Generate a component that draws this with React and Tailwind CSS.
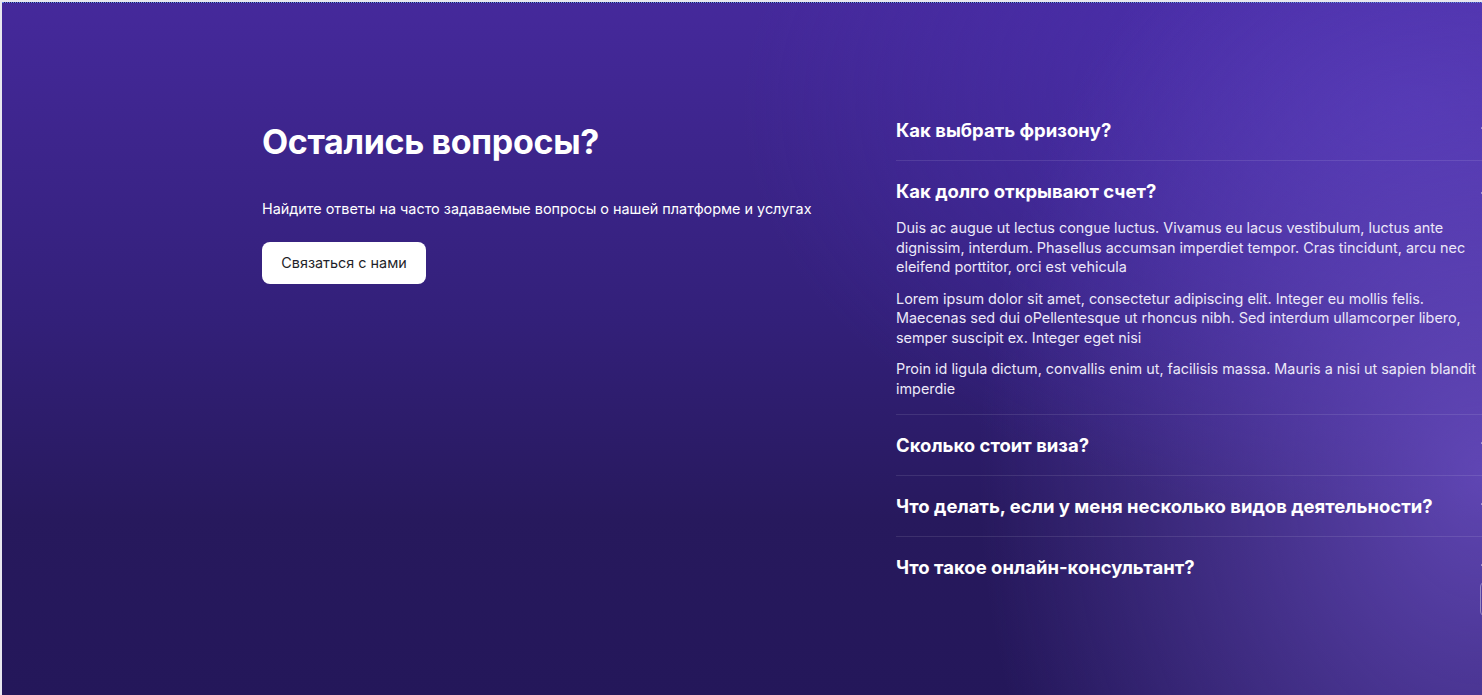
import { ChevronDown, ChevronUp } from 'lucide-react';

const faqs = [
  { q: 'Как выбрать фризону?' },
  {
    q: 'Как долго открывают счет?',
    open: true,
    a: [
      'Duis ac augue ut lectus congue luctus. Vivamus eu lacus vestibulum, luctus ante dignissim, interdum. Phasellus accumsan imperdiet tempor. Cras tincidunt, arcu nec eleifend porttitor, orci est vehicula',
      'Lorem ipsum dolor sit amet, consectetur adipiscing elit. Integer eu mollis felis. Maecenas sed dui oPellentesque ut rhoncus nibh. Sed interdum ullamcorper libero, semper suscipit ex. Integer eget nisi',
      'Proin id ligula dictum, convallis enim ut, facilisis massa. Mauris a nisi ut sapien blandit imperdie',
    ],
  },
  { q: 'Сколько стоит виза?' },
  { q: 'Что делать, если у меня несколько видов деятельности?' },
  { q: 'Что такое онлайн-консультант?' },
];

function FaqItem({ item, last }) {
  return (
    <div className={last ? '' : 'border-b border-white/10'}>
      <button className="flex w-full items-center justify-between py-4 text-left">
        <span className="text-[18.5px] font-bold leading-7 text-white">{item.q}</span>
        {item.open ? (
          <ChevronUp className="h-4 w-4 text-white" strokeWidth={2} />
        ) : (
          <ChevronDown className="h-4 w-4 text-white" strokeWidth={2} />
        )}
      </button>
      {item.open && (
        <div className="-mt-[3px] flex flex-col gap-3 pb-4 pr-4 text-[14.4px] leading-[19.5px] text-[#ece8f8]">
          {item.a.map((p, i) => (
            <p key={i}>{p}</p>
          ))}
        </div>
      )}
    </div>
  );
}

export default function App() {
  return (
    <div className="h-[695px] w-full overflow-hidden bg-[#e9e8ef] pl-[2px] pt-[2px] font-['Inter',sans-serif]">
      <section className="relative h-full overflow-hidden border-t border-dotted border-[#5f86ee] bg-[radial-gradient(ellipse_34%_95%_at_100%_68%,rgba(108,80,198,0.8),transparent),radial-gradient(ellipse_45%_60%_at_95%_15%,rgba(80,52,185,0.7),transparent),linear-gradient(180deg,#45299b_0%,#33207a_45%,#27195d_75%,#24175a_100%)]">
        <div className="grid w-[1300px] grid-cols-[594px_598px] gap-[40px] pl-[260px] pt-[97px]">
          {/* Left */}
          <div className="pt-[20px]">
            <h2 className="text-[34px] font-bold leading-[44px] tracking-[-0.01em] text-white">Остались вопросы?</h2>
            <p className="mt-[35px] text-[14.4px] leading-5 text-white">
              Найдите ответы на часто задаваемые вопросы о нашей платформе и услугах
            </p>
            <button className="mt-[23px] h-[42px] w-[164px] rounded-lg bg-white text-[14.4px] text-[#1f1f2a]">
              Связаться с нами
            </button>
          </div>

          {/* Right */}
          <div className="flex flex-col">
            {faqs.map((item, i) => (
              <FaqItem key={i} item={item} last={i === faqs.length - 1} />
            ))}
          </div>
        </div>

        <div className="absolute right-[-40px] top-[578px] h-[36px] w-[42px] rounded-md border border-white/40" />
      </section>
    </div>
  );
}
